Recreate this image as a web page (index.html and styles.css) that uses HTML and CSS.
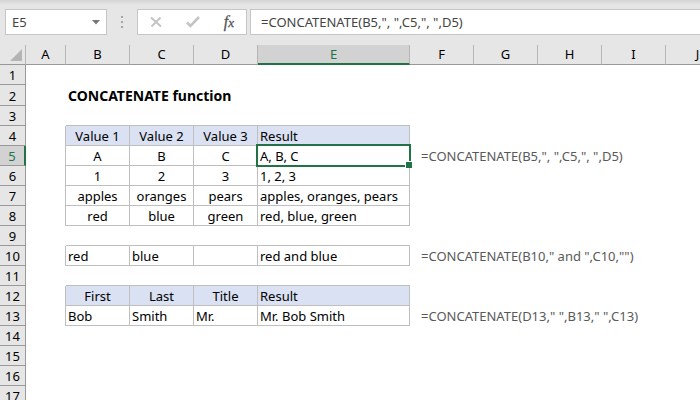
FILE: index.html
```html
<!DOCTYPE html>
<html lang="en">
<head>
    <meta charset="UTF-8">
    <meta name="viewport" content="width=device-width, initial-scale=1.0">
    <title>CONCATENATE function</title>
    <link rel="stylesheet" href="styles.css">
</head>
<body>

<div class="formula-bar">
    <div class="name-box">
        <input type="text" id="cell-name" value="E5" aria-label="Name box">
        <button class="drop" aria-label="Show names">
            <svg width="8" height="5" viewBox="0 0 8 5"><path d="M0 0h8L4 4.5z" fill="#777"/></svg>
        </button>
    </div>
    <div class="dots"><i></i><i></i><i></i></div>
    <div class="tools">
        <button aria-label="Cancel">
            <svg width="12" height="12" viewBox="0 0 12 12"><path d="M1 1.5L11 10.5M10.5 1.5L1.5 10.5" fill="none" stroke="#c4c4c4" stroke-width="2"/></svg>
        </button>
        <button aria-label="Enter">
            <svg width="14" height="12" viewBox="0 0 14 12"><path d="M1 6.5L4.5 10L13 1" fill="none" stroke="#c4c4c4" stroke-width="2.6"/></svg>
        </button>
        <button class="fx" aria-label="Insert function"><em>f</em><em class="x">x</em></button>
    </div>
    <input type="text" class="formula-input" aria-label="Formula" value='=CONCATENATE(B5,", ",C5,", ",D5)'>
</div>

<table class="sheet">
    <colgroup>
        <col class="col-head"><col class="col-a"><col><col><col><col class="col-e"><col><col><col><col><col>
    </colgroup>
    <thead>
        <tr>
            <th class="corner"><svg width="12" height="12" viewBox="0 0 12 12"><path d="M12 0v12H0z" fill="#b4b4b4"/></svg></th>
            <th>A</th><th>B</th><th>C</th><th>D</th><th class="active">E</th><th>F</th><th>G</th><th>H</th><th>I</th><th>J</th>
        </tr>
    </thead>
    <tbody>
        <tr><th>1</th></tr>
        <tr class="title"><th>2</th><td></td><td>CONCATENATE function</td></tr>
        <tr class="above"><th>3</th><td></td><td></td><td></td><td></td><td></td></tr>
        <tr class="data head"><th>4</th><td></td><td>Value 1</td><td>Value 2</td><td>Value 3</td><td>Result</td></tr>
        <tr class="data mid"><th class="active">5</th><td></td><td>A</td><td>B</td><td>C</td><td class="selected">A, B, C</td><td class="formula">=CONCATENATE(B5,", ",C5,", ",D5)</td></tr>
        <tr class="data mid"><th>6</th><td></td><td>1</td><td>2</td><td>3</td><td>1, 2, 3</td></tr>
        <tr class="data mid"><th>7</th><td></td><td>apples</td><td>oranges</td><td>pears</td><td>apples, oranges, pears</td></tr>
        <tr class="data mid"><th>8</th><td></td><td>red</td><td>blue</td><td>green</td><td>red, blue, green</td></tr>
        <tr class="above"><th>9</th><td></td><td></td><td></td><td></td><td></td></tr>
        <tr class="data"><th>10</th><td></td><td>red</td><td>blue</td><td></td><td>red and blue</td><td class="formula">=CONCATENATE(B10," and ",C10,"")</td></tr>
        <tr class="above"><th>11</th><td></td><td></td><td></td><td></td><td></td></tr>
        <tr class="data head"><th>12</th><td></td><td>First</td><td>Last</td><td>Title</td><td>Result</td></tr>
        <tr class="data"><th>13</th><td></td><td>Bob</td><td>Smith</td><td>Mr.</td><td>Mr. Bob Smith</td><td class="formula">=CONCATENATE(D13," ",B13," ",C13)</td></tr>
        <tr><th>14</th></tr>
        <tr><th>15</th></tr>
        <tr><th>16</th></tr>
        <tr><th>17</th></tr>
    </tbody>
</table>

</body>
</html>
```
FILE: styles.css
```css
* {
    box-sizing: border-box;
}
body {
    margin: 0;
    background: #fff;
    color: #000;
    font-family: "Noto Sans", sans-serif;
    font-size: 13px;
    height: 100vh;
    overflow: hidden;
}
input, button {
    font: inherit;
    border: none;
    background: none;
    padding: 0;
    margin: 0;
}

/* formula bar */
.formula-bar {
    display: flex;
    background: linear-gradient(#d4d4d4, #e6e6e6 5px);
    padding: 9px 0 10px 5px;
}
.name-box, .tools, .formula-input {
    height: 26px;
    background: #fff;
    border: 1px solid #c6c6c6;
}
.name-box {
    display: flex;
    width: 102px;
    padding: 0 6px;
}
.name-box input {
    flex: 1;
    min-width: 0;
    color: #444;
}
.drop {
    display: flex;
    align-items: center;
}
.dots {
    display: flex;
    flex-direction: column;
    justify-content: center;
    align-items: center;
    gap: 3px;
    width: 30px;
}
.dots i {
    width: 2px;
    height: 2px;
    background: #a6a6a6;
}
.tools {
    display: flex;
    align-items: center;
    justify-content: space-between;
    width: 110px;
    padding: 0 12px;
    margin-right: 3px;
}
.tools button {
    display: flex;
    align-items: baseline;
}
.tools .fx {
    font-family: "Liberation Serif", serif;
    font-size: 16px;
    line-height: 16px;
    color: #555;
    -webkit-text-stroke: 0.3px #555;
}
.fx .x {
    font-size: 13px;
}
.formula-input {
    flex: 1;
    min-width: 0;
    border-right: none;
    padding: 0 10px;
    color: #444;
}

/* sheet */
.sheet {
    table-layout: fixed;
    width: 100%;
    border-collapse: separate;
    border-spacing: 0;
}
.sheet col {
    width: 64px;
}
.sheet .col-head {
    width: 26px;
}
.sheet .col-a {
    width: 40px;
}
.sheet .col-e {
    width: 152px;
}
.sheet th, .sheet td {
    height: 20px;
    padding: 2px 2px 0;
    line-height: 17px;
    font-weight: normal;
    text-align: left;
    vertical-align: top;
    white-space: nowrap;
    border: 0 solid #bfbfbf;
}
.sheet th {
    padding: 2px 0 0;
    text-align: center;
    background: #e6e6e6;
    border-color: #999;
    border-width: 0 1px 1px 0;
}
.sheet thead th {
    padding-top: 1px;
    border-right-color: #b5b5b5;
}
.sheet thead .corner {
    text-align: right;
    padding: 4px 3px 3px 0;
    line-height: 0;
}
.sheet thead .active {
    background: #d2d2d2;
    color: #217346;
    border-bottom: 2px solid #217346;
}
.sheet tbody .active {
    background: #d2d2d2;
    color: #217346;
    border-right: 2px solid #217346;
}
.sheet .title th, .sheet .title td {
    height: 21px;
    line-height: 18px;
}
.sheet .title td {
    font-size: 14px;
    font-weight: bold;
}
.above td:nth-child(n+3), .data td:nth-child(n+3) {
    border-bottom-width: 1px;
}
.data td:nth-child(n+2) {
    border-right-width: 1px;
}
.head td:nth-child(n+3) {
    background: #d9e1f2;
}
.head td:nth-child(-n+5), .mid td:nth-child(-n+5) {
    text-align: center;
}
.sheet .formula {
    border: none;
    padding-left: 11px;
    color: #595959;
}

/* selection frame and fill handle */
.selected {
    position: relative;
}
.selected::before {
    content: "";
    position: absolute;
    inset: -2px;
    border: 2px solid #217346;
}
.selected::after {
    content: "";
    position: absolute;
    right: -3px;
    bottom: -3px;
    width: 6px;
    height: 6px;
    background: #217346;
    border: 1px solid #fff;
    border-width: 1px 0 0 1px;
}
```
